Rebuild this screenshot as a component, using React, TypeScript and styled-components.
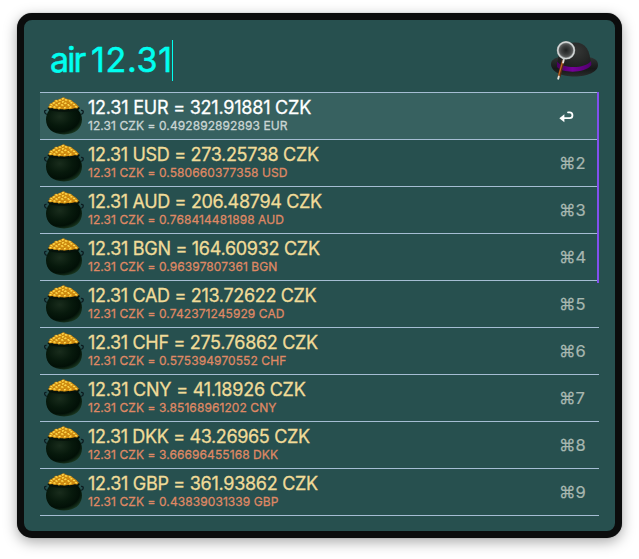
import React from "react";
import styled, { createGlobalStyle } from "styled-components";

const GlobalStyle = createGlobalStyle`
  * { box-sizing: border-box; }
  html, body { margin: 0; background: #fff; }
  body { font-family: Inter, "Liberation Sans", sans-serif; overflow: hidden; }
`;

const Desktop = styled.main`
  width: 639px;
  height: 559px;
  padding: 13px 17px 21px;
`;

const Panel = styled.section`
  width: 605px;
  height: 525px;
  border: 7px solid #0b0c0c;
  border-radius: 15px;
  background: #27504f;
  padding: 16px;
  box-shadow: 0 4px 14px rgba(0, 0, 0, 0.34), 0 0 1px rgba(0, 0, 0, 0.5);
`;

const SearchBar = styled.header`
  display: flex;
  justify-content: space-between;
  height: 56px;
`;

const Query = styled.div`
  display: flex;
  align-items: center;
  height: 47px;
  padding-left: 10px;
  color: #00fff0;
  font-size: 34px;
  -webkit-text-stroke: 0.5px currentColor;
`;

const Keyword = styled.span`
  width: 41px;
  letter-spacing: -1.9px;
`;

const Amount = styled.span`
  letter-spacing: 0.7px;
`;

const Caret = styled.span`
  width: 1px;
  height: 41px;
  margin-top: 1px;
  margin-left: -1px;
  background: #00fff0;
`;

const HatIcon = styled.svg`
  width: 50px;
  height: 44px;
  margin-top: 2px;
`;

const Results = styled.ul`
  position: relative;
  list-style: none;
  margin: 0;
  padding: 0;
  border-top: 1px solid #a5bdd3;
`;

const ScrollThumb = styled.span`
  position: absolute;
  top: -1px;
  right: 0;
  width: 2px;
  height: 191px;
  background: #8250ee;
`;

const ResultRow = styled.li<{ $active: boolean }>`
  display: flex;
  height: 47px;
  border-bottom: 1px solid #a5bdd3;
  background: ${(p) => (p.$active ? "#376160" : "transparent")};
`;

const PotIcon = styled.svg`
  flex: none;
  width: 40px;
  height: 40px;
  margin: 3px 4px 0;
`;

const Copy = styled.div`
  flex: 1;
  padding-top: 3px;
  white-space: nowrap;
`;

const Title = styled.div<{ $active: boolean; $tracking: number }>`
  font-size: 18px;
  line-height: 23px;
  letter-spacing: ${(p) => p.$tracking}px;
  -webkit-text-stroke: 0.3px currentColor;
  color: ${(p) => (p.$active ? "#ffffff" : "#f0db98")};
`;

const Subtitle = styled.div<{ $active: boolean }>`
  font-size: 12px;
  line-height: 14px;
  letter-spacing: 0.08px;
  -webkit-text-stroke: 0.3px currentColor;
  color: ${(p) => (p.$active ? "#cad5d4" : "#df8864")};
`;

const Shortcut = styled.div`
  display: flex;
  align-items: center;
  width: 40px;
  height: 46px;
  font-size: 16.5px;
  -webkit-text-stroke: 0.2px currentColor;
  color: #a7b7b0;
`;

const ReturnIcon = styled.svg`
  width: 15px;
  height: 12px;
  margin-top: 1px;
`;

function Hat() {
  return (
    <HatIcon viewBox="0 0 50 44">
      <defs>
        <radialGradient id="crown" cx="0.55" cy="0.3" r="0.75">
          <stop offset="0" stopColor="#353736" />
          <stop offset="1" stopColor="#171919" />
        </radialGradient>
        <radialGradient id="lens">
          <stop offset="0" stopColor="#202222" />
          <stop offset="0.55" stopColor="#3e4040" />
          <stop offset="1" stopColor="#6c6e6e" />
        </radialGradient>
        <linearGradient id="band">
          <stop offset="0" stopColor="#48005f" />
          <stop offset="0.45" stopColor="#76009a" />
          <stop offset="1" stopColor="#50006c" />
        </linearGradient>
        <linearGradient id="brim" x1="0" y1="0" x2="0" y2="1">
          <stop offset="0" stopColor="#303333" />
          <stop offset="0.6" stopColor="#161818" />
          <stop offset="1" stopColor="#292c2c" />
        </linearGradient>
      </defs>
      <path d="M2 26C2 22 6 20 10 19H40C45 20 49 22 49 27C49 34 38 38.5 25.5 38.5S2 34 2 26Z" fill="url(#brim)" />
      <path d="M8 29C9 12 15 4.5 26 4.5S41 12 42 27C36 35 15 35 8 29" fill="url(#crown)" />
      <path d="M8 23.5C14 31 36 31 42 23L42.3 27C37 35.5 13 35.5 8 29Z" fill="url(#band)" />
      <path d="M14.2 22L10 39" stroke="#5d2b10" strokeWidth="3" />
      <path d="M13.5 24L9.7 37.5" stroke="#c26a26" strokeWidth="1.2" />
      <path d="M15 20.5L14.1 24.5M9.8 38.5L9.2 40.7" stroke="#e4e5de" strokeWidth="1.9" strokeLinecap="round" />
      <circle cx="17" cy="12.3" r="8.2" fill="url(#lens)" stroke="#8a8e8e" strokeWidth="2.2" />
      <circle cx="17" cy="12.3" r="8.3" fill="none" stroke="#d4d8d8" strokeWidth="1.3" />
    </HatIcon>
  );
}

const coins: [number, number][] = [
  [19, 3], [16, 4.4], [22, 4.2], [12.5, 5.2], [19, 6], [26, 5.2], [10, 7.2],
  [15.3, 7.4], [21.5, 7.4], [27.5, 7], [7.5, 9], [12.5, 9.2], [18.2, 9.2],
  [24.5, 9.2], [30, 8.7], [6.5, 10.9], [10.5, 11.2], [15.5, 11.8], [21, 11.8],
  [26.5, 11.4], [32, 10.8],
];

function Pot() {
  return (
    <PotIcon viewBox="0 0 40 40">
      <defs>
        <radialGradient id="iron" cx="0.38" cy="0.35" r="0.68">
          <stop offset="0" stopColor="#192c1c" />
          <stop offset="0.5" stopColor="#07190c" />
          <stop offset="0.82" stopColor="#021007" />
          <stop offset="1" stopColor="#17331d" />
        </radialGradient>
      </defs>
      <path d="M2.8 18.5C-0.2 17 0 14 2.5 14.3M37.2 18.5C40.2 17 39.8 14 37 14.3" fill="none" stroke="#0c1c20" strokeWidth="1.3" />
      <path d="M4.5 11H35L34.5 14.5C37 17 38 20 38 23.5C38 32 31.5 38.4 20 38.4S2 32 2 23.5C2 20 3 17 5 14.5Z" fill="url(#iron)" />
      <path d="M4.2 11.5C8 15.8 31 15.8 35.3 11.5" fill="none" stroke="#06120b" strokeWidth="2.2" />
      <path d="M4.8 11C6 7.5 9 6.5 12 4.5L15 3.4L18.5 1.8L24 3.2L28 5L32 7.7L35 11C29 14 11 14 4.8 11Z" fill="#d08a12" />
      {coins.map(([x, y]) => (
        <g key={`${x}-${y}`} transform={`rotate(${((x * 37) % 70) - 35} ${x} ${y})`}>
          <ellipse cx={x} cy={y} rx="2" ry="1.2" fill="#f3bb2a" stroke="#bd7b0c" strokeWidth="0.5" />
          <path d={`M${x - 0.9} ${y - 0.3}h1.6`} stroke="#ffe566" strokeWidth="0.9" />
        </g>
      ))}
    </PotIcon>
  );
}

const results = [
  { title: "12.31 EUR = 321.91881 CZK", subtitle: "12.31 CZK = 0.492892892893 EUR", tracking: -0.22 },
  { title: "12.31 USD = 273.25738 CZK", subtitle: "12.31 CZK = 0.580660377358 USD", tracking: -0.33 },
  { title: "12.31 AUD = 206.48794 CZK", subtitle: "12.31 CZK = 0.768414481898 AUD", tracking: -0.34 },
  { title: "12.31 BGN = 164.60932 CZK", subtitle: "12.31 CZK = 0.96397807361 BGN", tracking: -0.29 },
  { title: "12.31 CAD = 213.72622 CZK", subtitle: "12.31 CZK = 0.742371245929 CAD", tracking: -0.33 },
  { title: "12.31 CHF = 275.76862 CZK", subtitle: "12.31 CZK = 0.575394970552 CHF", tracking: -0.33 },
  { title: "12.31 CNY = 41.18926 CZK", subtitle: "12.31 CZK = 3.85168961202 CNY", tracking: -0.23 },
  { title: "12.31 DKK = 43.26965 CZK", subtitle: "12.31 CZK = 3.66696455168 DKK", tracking: -0.36 },
  { title: "12.31 GBP = 361.93862 CZK", subtitle: "12.31 CZK = 0.43839031339 GBP", tracking: -0.29 },
];

export default function App() {
  return (
    <>
      <GlobalStyle />
      <Desktop>
        <Panel>
          <SearchBar>
            <Query>
              <Keyword>air </Keyword>
              <Amount>12.31</Amount>
              <Caret />
            </Query>
            <Hat />
          </SearchBar>
          <Results>
            {results.map(({ title, subtitle, tracking }, index) => (
              <ResultRow key={title} $active={index === 0}>
                <Pot />
                <Copy>
                  <Title $active={index === 0} $tracking={tracking}>{title}</Title>
                  <Subtitle $active={index === 0}>{subtitle}</Subtitle>
                </Copy>
                <Shortcut>
                  {index === 0 ? (
                    <ReturnIcon viewBox="0 0 15 12">
                      <path d="M9 1.3H10.6C14.4 1.3 14.4 7.2 10.6 7.2H3" fill="none" stroke="#fff" strokeWidth="1.8" strokeLinecap="round" />
                      <path d="M5.4 3.2V11.2L0.3 7.2Z" fill="#fff" />
                    </ReturnIcon>
                  ) : `⌘${index + 1}`}
                </Shortcut>
              </ResultRow>
            ))}
            <ScrollThumb />
          </Results>
        </Panel>
      </Desktop>
    </>
  );
}
